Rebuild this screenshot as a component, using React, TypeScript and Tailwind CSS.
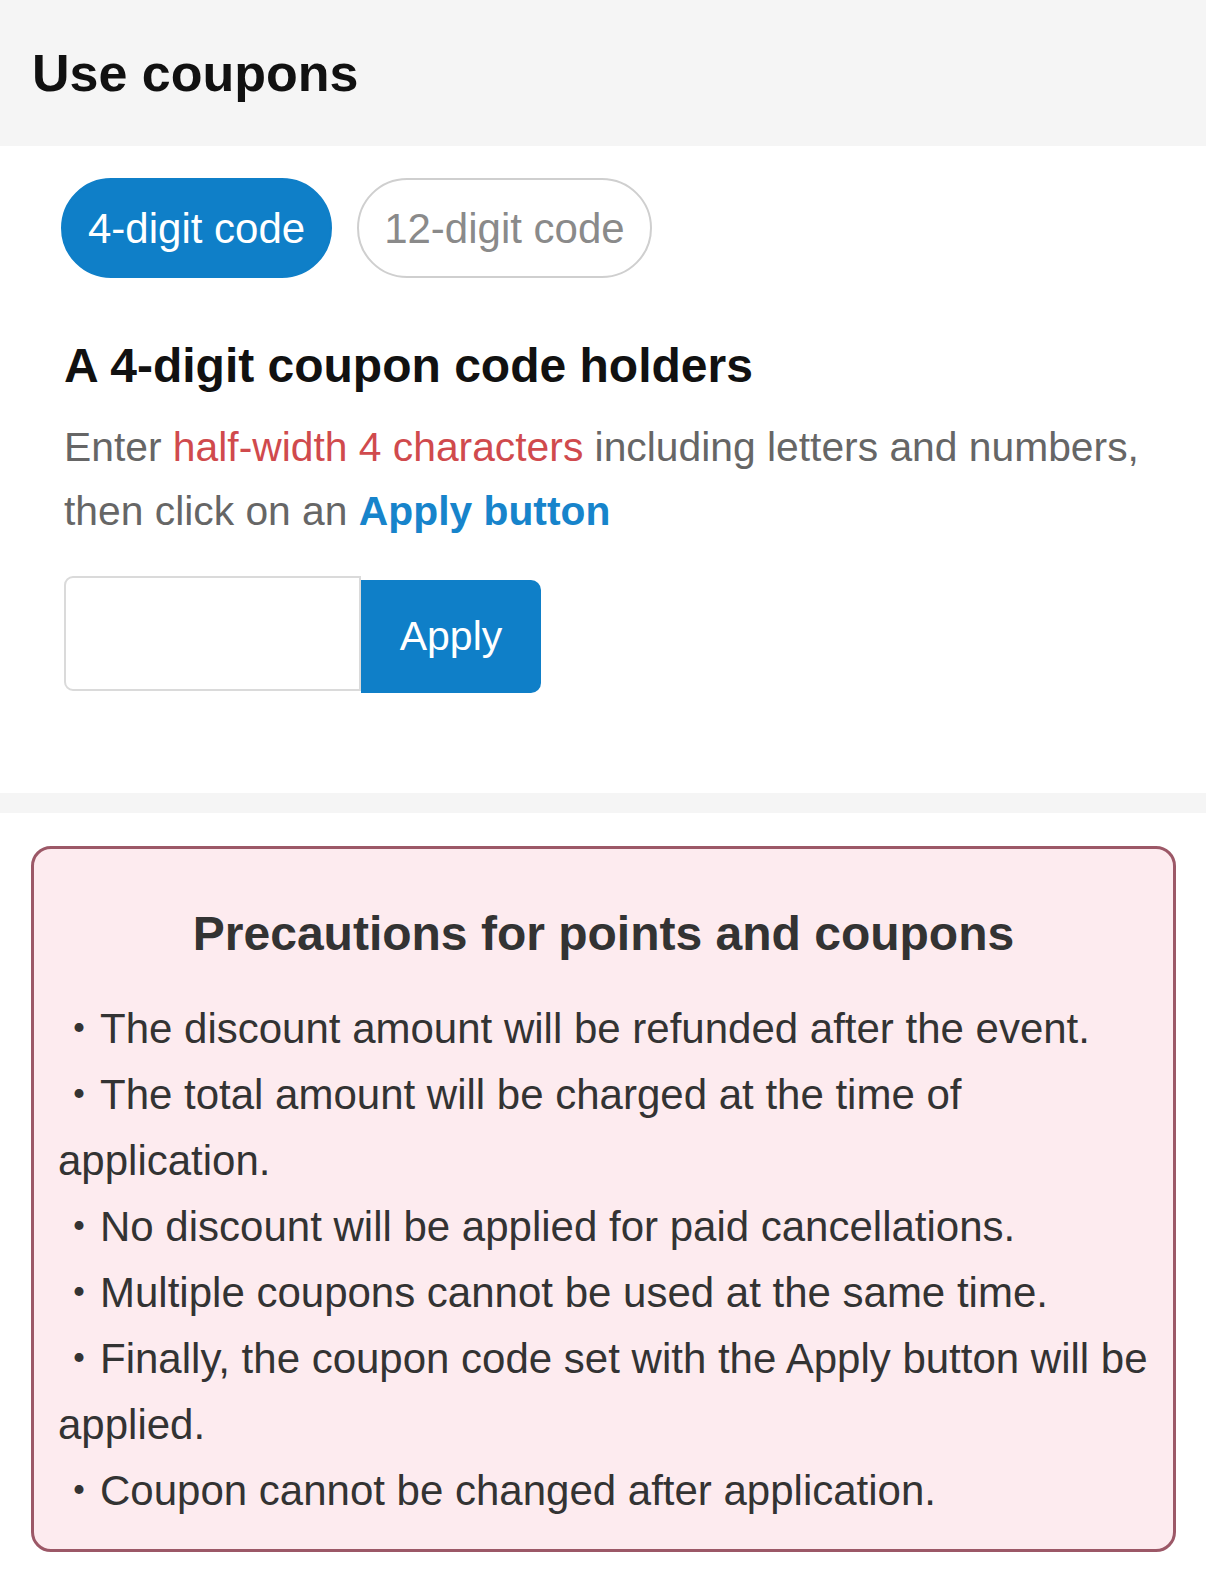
import { useState } from "react"

const notes = [
  "The discount amount will be refunded after the event.",
  "The total amount will be charged at the time of application.",
  "No discount will be applied for paid cancellations.",
  "Multiple coupons cannot be used at the same time.",
  "Finally, the coupon code set with the Apply button will be applied.",
  "Coupon cannot be changed after application.",
]

function CodeTabs({ active, onChange }: { active: number, onChange: (i: number) => void }) {
  const tabs = ["4-digit code", "12-digit code"]
  return (
    <div className="flex gap-[25px] pl-[61px]">
      {tabs.map((label, idx) => (
        <button
          key={idx}
          onClick={() => onChange(idx)}
          className={
            idx === active
              ? "h-[100px] px-[25px] rounded-full bg-[#0f7fc8] border-2 border-[#0f7fc8] text-white text-[42px]"
              : "h-[100px] px-[25px] rounded-full bg-white border-2 border-[#cfcfcf] text-[#8a8a8a] text-[42px]"
          }
        >
          {label}
        </button>
      ))}
    </div>
  )
}

export default function App() {
  const [tab, setTab] = useState(0)
  const [code, setCode] = useState("")

  return (
    <div className="w-[1206px] min-h-[1582px] bg-white font-['Liberation_Sans','Noto_Sans_CJK_JP',sans-serif]">
      <div className="h-[146px] bg-[#f5f5f5] flex items-center pl-[32px]">
        <h1 className="text-[52px] font-bold text-[#111] leading-none">Use coupons</h1>
      </div>

      <div className="pt-[32px] pb-[100px]">
        <CodeTabs active={tab} onChange={setTab} />

        <div className="px-[64px]">
          <h2 className="mt-[58px] text-[48px] font-bold text-[#111] leading-[60px]">
            A 4-digit coupon code holders
          </h2>
          <p className="mt-[19px] text-[40.8px] leading-[64px] text-[#666]">
            Enter <span className="text-[#d04a4d]">half-width 4 characters</span> including letters and numbers,
            then click on an <span className="font-bold text-[#1784cb]">Apply button</span>
          </p>

          <div className="mt-[33px] flex items-start">
            <input
              value={code}
              onChange={e => setCode(e.target.value)}
              maxLength={4}
              className="w-[297px] h-[115px] border-2 border-[#dadada] rounded-l-[9px] px-4 text-[40px] outline-none"
            />
            <button className="mt-[4px] w-[180px] h-[113px] bg-[#0f7fc8] rounded-r-[10px] text-white text-[41px]">
              Apply
            </button>
          </div>
        </div>
      </div>

      <div className="h-[20px] bg-[#f5f5f5]" />

      <div className="pt-[33px] pb-[30px] pl-[31px] pr-[30px]">
        <div className="border-[3px] border-[#9c5867] rounded-[20px] bg-[#fdebef] pt-[47px] pb-[25px] pl-[24px] pr-[24px]">
          <h3 className="text-center text-[48px] font-bold text-[#333] leading-[76px]">
            Precautions for points and coupons
          </h3>
          <div className="mt-[24px] text-[42px] leading-[66px] text-[#333]">
            {notes.map((n, idx) => (
              <div key={idx}>・{n}</div>
            ))}
          </div>
        </div>
      </div>

      <div className="h-[19px] bg-[#f5f5f5]" />
    </div>
  )
}
